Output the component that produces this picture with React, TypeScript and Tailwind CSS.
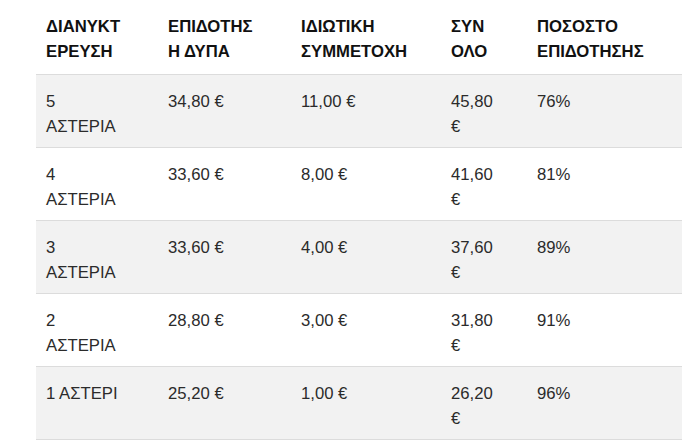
const headers: string[][] = [
  ["ΔΙΑΝΥΚΤ", "ΕΡΕΥΣΗ"],
  ["ΕΠΙΔΟΤΗΣ", "Η ΔΥΠΑ"],
  ["ΙΔΙΩΤΙΚΗ", "ΣΥΜΜΕΤΟΧΗ"],
  ["ΣΥΝ", "ΟΛΟ"],
  ["ΠΟΣΟΣΤΟ", "ΕΠΙΔΟΤΗΣΗΣ"],
];

const rows: string[][][] = [
  [["5", "ΑΣΤΕΡΙΑ"], ["34,80 €"], ["11,00 €"], ["45,80", "€"], ["76%"]],
  [["4", "ΑΣΤΕΡΙΑ"], ["33,60 €"], ["8,00 €"], ["41,60", "€"], ["81%"]],
  [["3", "ΑΣΤΕΡΙΑ"], ["33,60 €"], ["4,00 €"], ["37,60", "€"], ["89%"]],
  [["2", "ΑΣΤΕΡΙΑ"], ["28,80 €"], ["3,00 €"], ["31,80", "€"], ["91%"]],
  [["1 ΑΣΤΕΡΙ"], ["25,20 €"], ["1,00 €"], ["26,20", "€"], ["96%"]],
];

const widths = ["w-[122px]", "w-[133px]", "w-[150px]", "w-[86px]", "w-[155px]"];

function Lines({ lines }: { lines: string[] }) {
  return (
    <>
      {lines.map((l, i) => (
        <div key={i} className="whitespace-nowrap">
          {l}
        </div>
      ))}
    </>
  );
}

export default function App() {
  return (
    <div className="min-h-[447px] w-[687px] bg-white font-['Liberation_Sans',Arial,sans-serif] text-[16.7px] leading-[25px]">
      <table className="ml-[36px] w-[646px] table-fixed border-collapse">
        <colgroup>
          {widths.map((w, i) => (
            <col key={i} className={w} />
          ))}
        </colgroup>
        <thead>
          <tr className="border-b border-[#dcdcdc]">
            {headers.map((h, i) => (
              <th
                key={i}
                className="px-[10px] pt-[14px] pb-[10px] text-left align-top font-bold text-[#111111]"
              >
                <Lines lines={h} />
              </th>
            ))}
          </tr>
        </thead>
        <tbody>
          {rows.map((r, ri) => (
            <tr
              key={ri}
              className={
                "border-b border-[#dcdcdc] " +
                (ri % 2 === 0 ? "bg-[#f2f2f2]" : "bg-white")
              }
            >
              {r.map((c, ci) => (
                <td
                  key={ci}
                  className="px-[10px] pt-[14px] pb-[8px] align-top text-[#2b2b2b]"
                >
                  <Lines lines={c} />
                </td>
              ))}
            </tr>
          ))}
        </tbody>
      </table>
    </div>
  );
}
